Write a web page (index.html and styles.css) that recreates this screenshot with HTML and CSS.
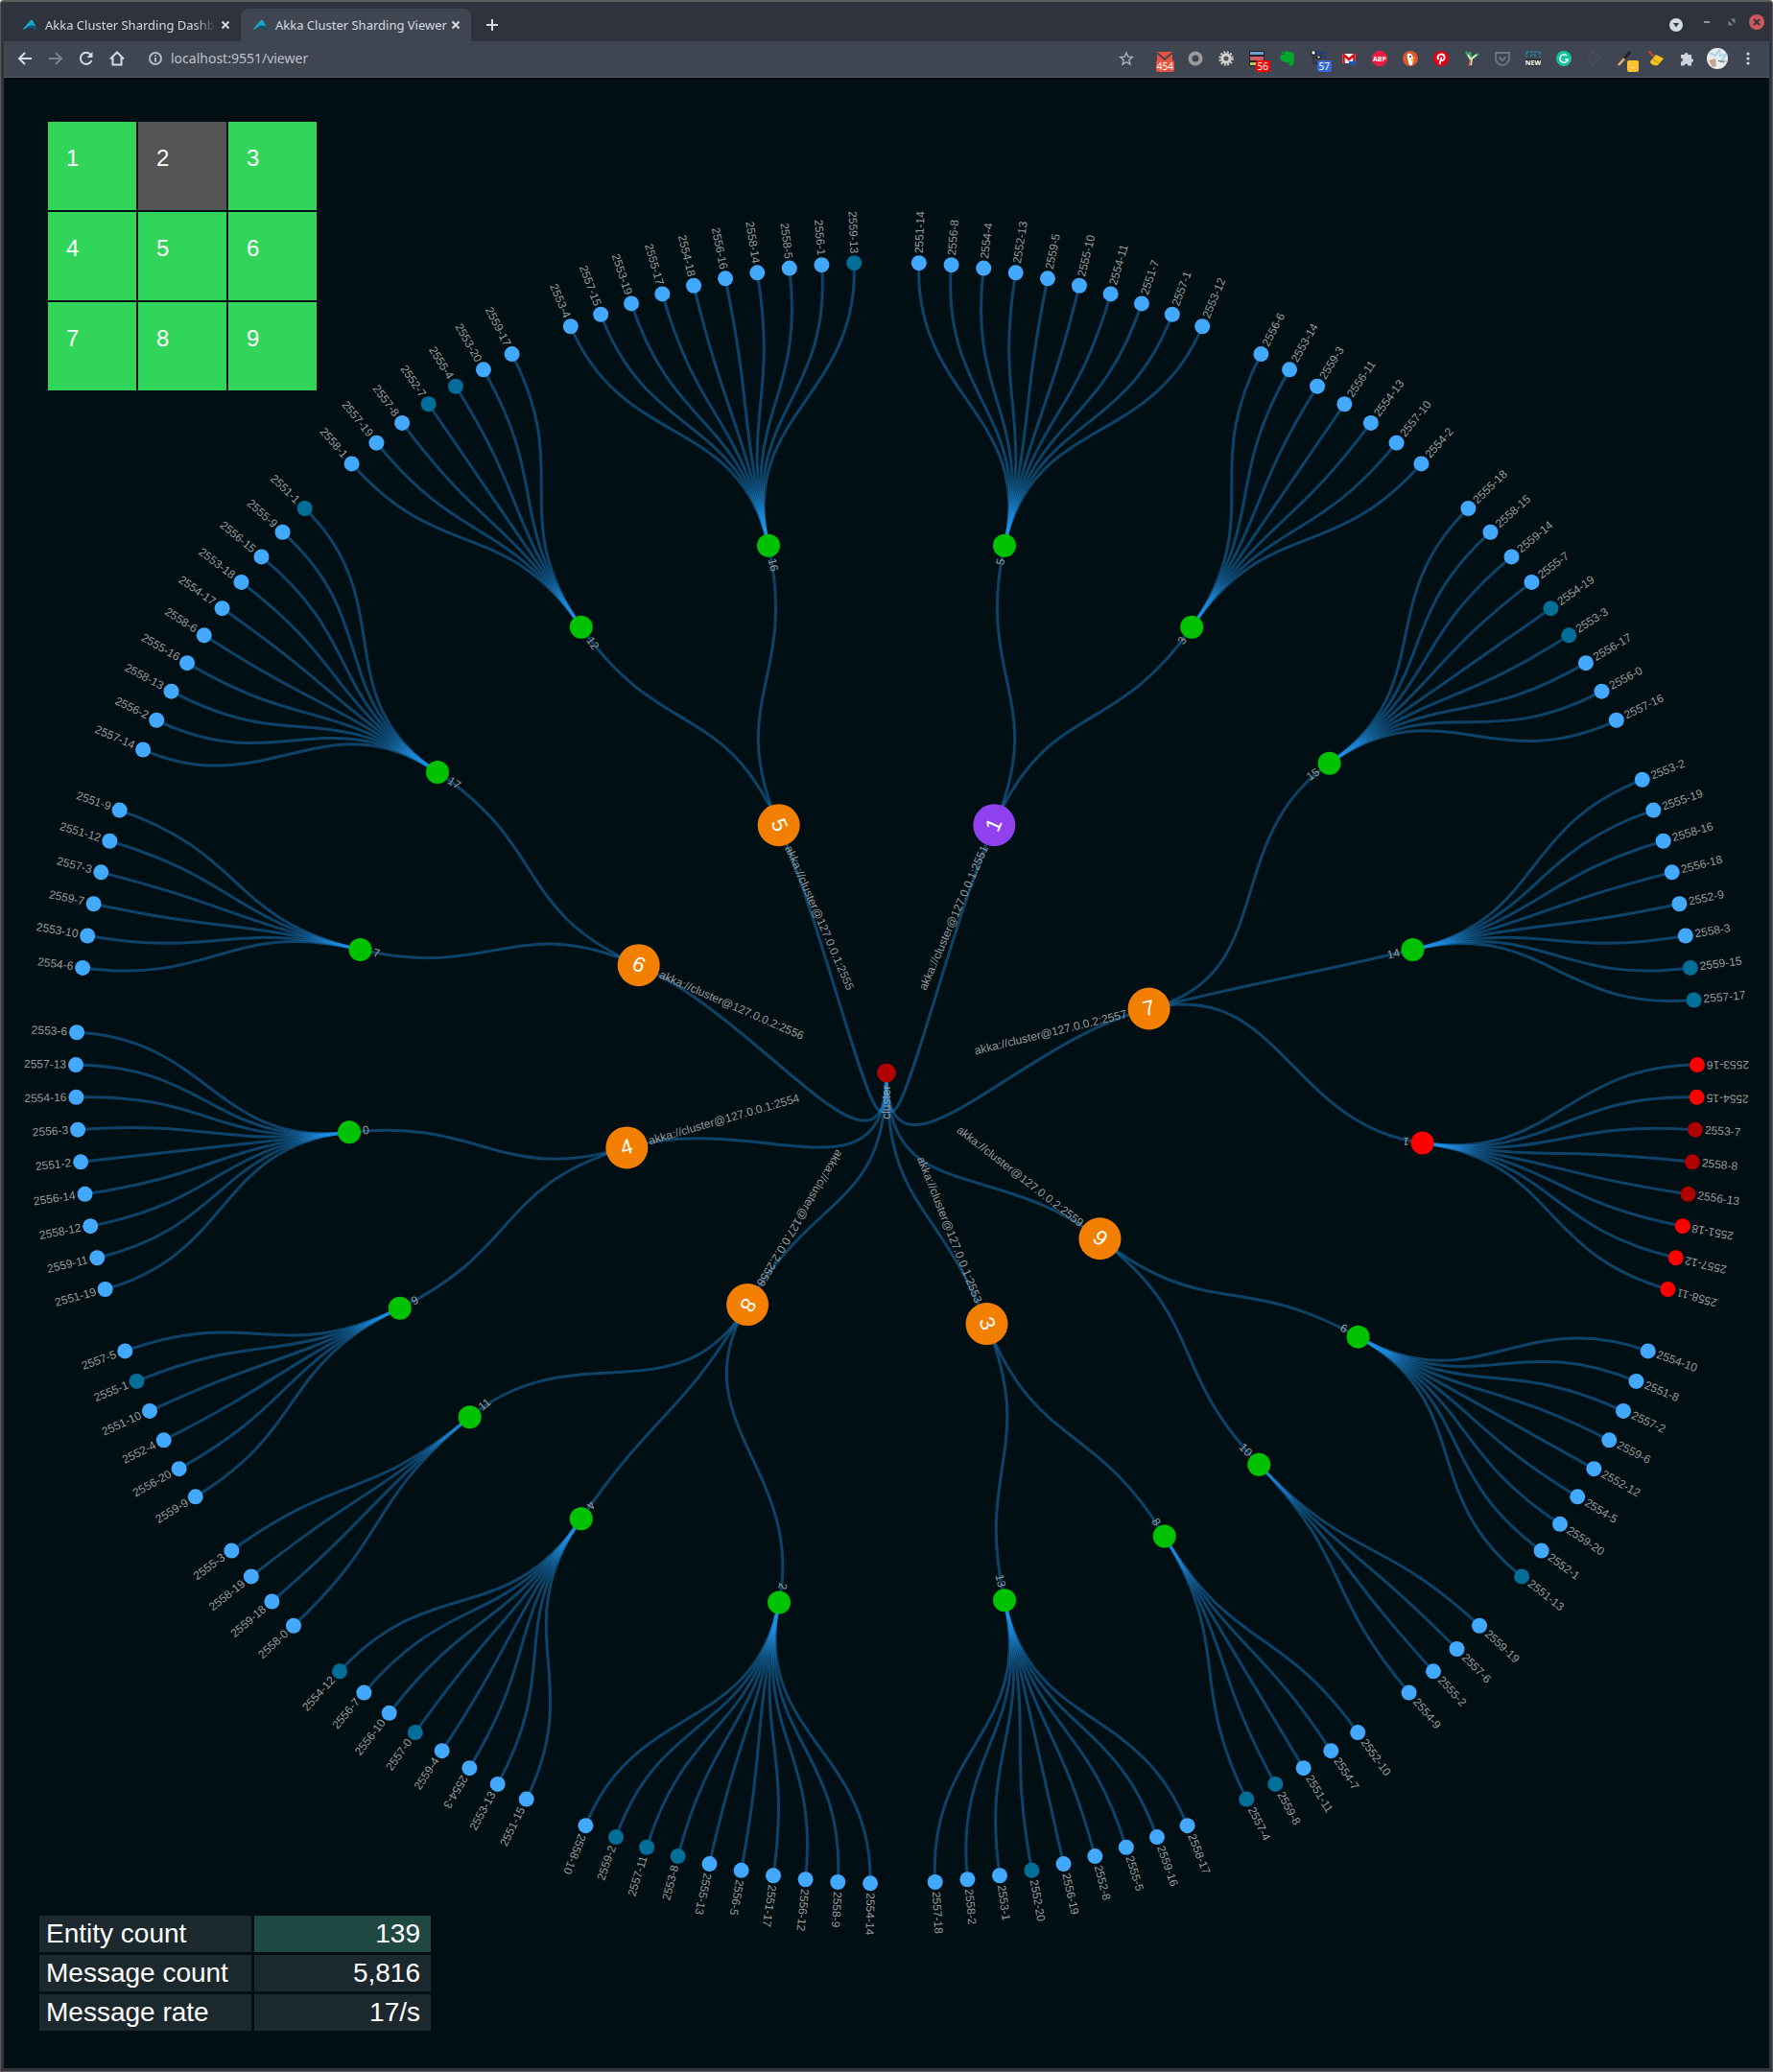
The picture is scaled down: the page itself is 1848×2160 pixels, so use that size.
FILE: index.html
```html
<!DOCTYPE html>
<html lang="en">
<head>
<meta charset="utf-8">
<title>Akka Cluster Sharding Viewer</title>
<link rel="stylesheet" href="styles.css">
</head>
<body>
<div class="window">
  <header class="tabstrip">
    <div class="tab">
      <svg class="favicon" viewBox="0 0 16 16"><path d="M0.500 12.500L8 4Q10 1.500 11.500 4L14.500 10Q10 7 6 10Q3 13 0.500 12.500z" fill="#15a9ce"/><path d="M5 10.800Q10 6.500 14.500 10Q16 13.500 13 13.200Q9 10.500 5 10.800z" fill="#0b5567"/></svg>
      <button class="tab-title">Akka Cluster Sharding Dashboard</button>
      <button class="tab-close" aria-label="Close tab"><svg viewBox="0 0 16 16"><path d="M4.500 4.500l7 7m0-7l-7 7"/></svg></button>
    </div>
    <div class="tab tab-active">
      <svg class="favicon" viewBox="0 0 16 16"><path d="M0.500 12.500L8 4Q10 1.500 11.500 4L14.500 10Q10 7 6 10Q3 13 0.500 12.500z" fill="#15a9ce"/><path d="M5 10.800Q10 6.500 14.500 10Q16 13.500 13 13.200Q9 10.500 5 10.800z" fill="#0b5567"/></svg>
      <button class="tab-title">Akka Cluster Sharding Viewer</button>
      <button class="tab-close" aria-label="Close tab"><svg viewBox="0 0 16 16"><path d="M4.500 4.500l7 7m0-7l-7 7"/></svg></button>
    </div>
    <button class="new-tab" aria-label="New tab"><svg viewBox="0 0 16 16"><path d="M8 2v12M2 8h12"/></svg></button>
    <div class="window-buttons">
      <button class="tab-search" aria-label="Search tabs"><svg viewBox="0 0 16 16"><circle cx="8" cy="8" r="7" fill="#d3dae3"/><path d="M5 6h6l-3 4.500z" fill="#2f333d"/></svg></button>
      <button aria-label="Minimize"><svg viewBox="0 0 16 16"><path d="M5 8h6" stroke="#90949e" stroke-width="2"/></svg></button>
      <button aria-label="Restore"><svg viewBox="0 0 16 16"><path d="M4.500 6.500v5h5zM11.500 9.500v-5h-5z" fill="#7a7e88"/></svg></button>
      <button aria-label="Close"><svg viewBox="0 0 16 16"><circle cx="8" cy="8" r="8" fill="#cc575d"/><path d="M5 5l6 6m0-6l-6 6" stroke="#2f333d" stroke-width="2"/></svg></button>
    </div>
  </header>

  <nav class="toolbar">
    <button class="tool" aria-label="Back"><svg viewBox="0 0 16 16" class="line"><path d="M15 8H2M8 2L2 8l6 6"/></svg></button>
    <button class="tool tool-off" aria-label="Forward"><svg viewBox="0 0 16 16" class="line"><path d="M1 8h13M8 2l6 6-6 6"/></svg></button>
    <button class="tool" aria-label="Reload"><svg viewBox="0 0 16 16" class="line"><path d="M13.500 10A6 6 0 1 1 12.500 4"/><path d="M14.500 1v6h-6z" fill="currentColor" stroke="none"/></svg></button>
    <button class="tool" aria-label="Home"><svg viewBox="0 0 16 16" class="line"><path d="M1 8.500L8 1.500l7 7M3.500 7v7.500h9V7"/></svg></button>
    <label class="address">
      <svg viewBox="0 0 16 16" class="info"><circle cx="8" cy="8" r="6"/><path d="M8 7v4.500M8 4.500v1.500"/></svg>
      <input type="text" value="localhost:9551/viewer" aria-label="Address">
    </label>
    <button class="star" aria-label="Bookmark"><svg viewBox="0 0 16 16"><path d="M8 2l1.800 4.200 4.500.4-3.400 3 1 4.400L8 11.700 4.100 14l1-4.400-3.400-3 4.500-.4z" fill="none" stroke="#aeb2bb" stroke-width="1.400"/></svg></button>

    <button class="tool" aria-label="Mail checker"><svg viewBox="0 0 16 16"><path d="M0 1h16v12H0z" fill="#e8523f"/><path d="M0 2l8 7 8-7" fill="none" stroke="#404552" stroke-width="2"/></svg><span class="badge badge-mail">454</span></button>
    <button class="tool" aria-label="Ring"><svg viewBox="0 0 16 16"><circle cx="8" cy="8" r="5.500" fill="none" stroke="#9b9b9b" stroke-width="4"/></svg></button>
    <button class="tool" aria-label="Settings"><svg viewBox="0 0 16 16"><circle cx="8" cy="8" r="6.500" fill="none" stroke="#c4c4c4" stroke-width="2.500" stroke-dasharray="2 1.400"/><circle cx="8" cy="8" r="4" fill="none" stroke="#d2d2d2" stroke-width="3"/><circle cx="8" cy="8" r="2" fill="#555"/></svg></button>
    <button class="tool" aria-label="Sessions"><svg viewBox="0 0 16 16"><path d="M0 0h16v5H0zM0 5h16v6H0zM0 11h16v5H0z" fill="#222"/><path d="M1 1h14v3H1z" fill="#6f9bd0"/><path d="M1 6h14v4H1z" fill="#cf5a6a"/><path d="M1 12h14v3H1z" fill="#b5d04a"/></svg><span class="badge badge-red">56</span></button>
    <button class="tool" aria-label="Notes"><svg viewBox="0 0 16 16"><path d="M5 0c2 0 2 1 4 1 3 0 5 0 5.500 3 .5 4 .5 9-1 11-1 1.500-4 1-4-1 0-1.500 1-2 2-2-1-1-3 1-5 0C5 11 2 12 1 9 0 7 0 5 1 4h4z" fill="#00a82d"/><path d="M1 3l3-3v3z" fill="#00a82d"/></svg></button>
    <button class="tool" aria-label="Tab tree"><svg viewBox="0 0 16 16"><path d="M3 2v12M3 7h5M3 13h5" stroke="#111" stroke-width="1" stroke-dasharray="1 1"/><path d="M1 0h4v4H1zM7 5h3v3H7zM7 11h3v3H7z" fill="#fff" stroke="#111"/><path d="M6 2h10M11 6.500h5M11 12h5" stroke="#1c3c80" stroke-width="3" stroke-dasharray="2 1"/></svg><span class="badge badge-blue">57</span></button>
    <button class="tool" aria-label="Gmail"><svg viewBox="0 0 16 16"><path d="M1 3h14v10H1z" fill="#f5f5f5"/><path d="M2.500 13V4L8 9l5.500-5v9" fill="none" stroke="#d4111b" stroke-width="2.500"/><path d="M8 11h4V9l4 3.500L12 16v-2H8z" fill="#1d56b8"/></svg></button>
    <button class="tool" aria-label="Ad blocker"><svg viewBox="0 0 16 16"><path d="M5 0h6l5 5v6l-5 5H5l-5-5V5z" fill="#ee1c43"/><text x="8" y="11" class="glyph">ABP</text></svg></button>
    <button class="tool" aria-label="Privacy search"><svg viewBox="0 0 16 16"><circle cx="8" cy="8" r="8" fill="#de5833"/><path d="M5 3c4-1 6 2 6 5l-1 7H7C6 11 4 7 5 3z" fill="#fff"/><path d="M9 8c2-1 5-1 4 0s-3 1-3 2c2 0 3 0 2 1-2 1-4 0-3-3z" fill="#fdb913"/><circle cx="8" cy="6" r="1" fill="#234"/></svg></button>
    <button class="tool" aria-label="Pins"><svg viewBox="0 0 16 16"><circle cx="8" cy="8" r="8" fill="#e60012"/><path d="M6.500 14l2-7.500M5.500 9C3 6 6 3.500 8.500 3.500c4 0 4 6.500.5 6.500-1 0-1.500-.5-1.500-1" fill="none" stroke="#fff" stroke-width="1.800"/></svg></button>
    <button class="tool" aria-label="Sprout"><svg viewBox="0 0 16 16"><path d="M7 9L2 1M8 8l7-5M7 8L6 1" stroke="#2fa86a" stroke-width="2.500"/><path d="M13 4L8 8l-1 7M4 4l3 5" fill="none" stroke="#d9e0ae" stroke-width="2"/><path d="M6 10l-1 6" stroke="#c44" stroke-width="1.500"/></svg></button>
    <button class="tool" aria-label="Read later"><svg viewBox="0 0 16 16"><path d="M1 2h14v6a7 7 0 0 1-14 0zM4.500 6.500L8 10l3.500-3.500" fill="none" stroke="#72767f" stroke-width="1.800"/></svg></button>
    <button class="tool" aria-label="Screen capture"><svg viewBox="0 0 16 16"><path d="M1 1h14M1 1v6M15 1v6M5 6l2-2h3v3" fill="none" stroke="#178a99" stroke-width="1.500" stroke-dasharray="3 1"/><path d="M0 8h16v8H0z" fill="#333"/><text x="8" y="15" class="glyph">NEW</text></svg></button>
    <button class="tool" aria-label="Grammar"><svg viewBox="0 0 16 16"><circle cx="8" cy="8" r="8" fill="#15c39a"/><path d="M11 5a4.200 4.200 0 1 0 1.200 4H9" fill="none" stroke="#fff" stroke-width="1.500"/></svg></button>
    <button class="tool" aria-label="Pointer"><svg viewBox="0 0 16 16" fill="#4d5058"><circle cx="6" cy="2" r="1.500"/><circle cx="10" cy="5" r="1.500"/><circle cx="14" cy="7" r="1.500"/><circle cx="2" cy="8" r="1.500"/><circle cx="10" cy="11" r="1.500"/><circle cx="6" cy="14" r="1.500"/></svg></button>
    <button class="tool" aria-label="Color picker"><svg viewBox="0 0 16 16"><path d="M1 15l7-8" stroke="#d8b46c" stroke-width="2.500"/><path d="M7 8l6-7" stroke="#222" stroke-width="3"/></svg><span class="badge badge-yellow">-</span></button>
    <button class="tool" aria-label="Cleaner"><svg viewBox="0 0 16 16"><path d="M0 0l6 6" stroke="#d5442d" stroke-width="2"/><path d="M8 4l8 4-6 7C6 16 2 14 2 11z" fill="#f2c21d"/><path d="M5 9l6 4" stroke="#b58a08"/></svg></button>
    <button class="tool" aria-label="Extensions"><svg viewBox="0 0 16 16"><path d="M2 4h3.500a2 2 0 1 1 4 0H13v4a2 2 0 1 1 0 4v3.500H9.500a2 2 0 1 0-4 0H2v-4a2 2 0 1 0 0-4z" fill="#ced3dc"/></svg></button>
    <button class="tool" aria-label="Profile"><svg viewBox="0 0 22 22" class="avatar"><circle cx="11" cy="11" r="11" fill="#e8ecee"/><path d="M3 5l6 3 4-6 1 6 6-1-4 5 5 3" fill="none" stroke="#a8d4e4" stroke-width="2"/><path d="M2 13l7-2 1 8-4 1z" fill="#c8a48c"/><path d="M12 13c2 2 4 0 6 2" fill="none" stroke="#445"/></svg></button>
    <button class="tool" aria-label="Menu"><svg viewBox="0 0 16 16" fill="#d3dae3"><circle cx="8" cy="3" r="1.600"/><circle cx="8" cy="8" r="1.600"/><circle cx="8" cy="13" r="1.600"/></svg></button>
  </nav>

  <main class="viewer">
    <svg id="cluster-tree" class="tree" viewBox="-920 -1037.500 1840 2075" role="img" aria-label="Cluster members, shards and entities"></svg>
    <div class="members">
      <button class="member">1</button>
      <button class="member member-down">2</button>
      <button class="member">3</button>
      <button class="member">4</button>
      <button class="member">5</button>
      <button class="member">6</button>
      <button class="member">7</button>
      <button class="member">8</button>
      <button class="member">9</button>
    </div>
    <table class="stats">
      <tr><th scope="row">Entity count</th><td class="changed">139</td></tr>
      <tr><th scope="row">Message count</th><td>5,816</td></tr>
      <tr><th scope="row">Message rate</th><td>17/s</td></tr>
    </table>
  </main>
</div>
<script src="viewer.js"></script>
</body>
</html>
```
FILE: styles.css
```css
* { box-sizing: border-box; }

body {
  margin: 0;
  background: #fff;
  font-family: "Noto Sans", sans-serif;
}

button {
  margin: 0;
  padding: 0;
  border: 0;
  background: none;
  color: inherit;
  font: inherit;
}

svg { display: block; }

.window {
  display: flex;
  flex-direction: column;
  min-height: 100vh;
  padding: 0 3px 3px;
  border: 1px solid #5c5c5c;
  border-top-width: 2px;
  border-radius: 4px 4px 0 0;
  background: #32333d;
}

/* Tab strip */
.tabstrip {
  display: flex;
  align-items: flex-end;
  height: 41px;
  padding: 0 5px 0 7px;
  background: #2f333d;
  color: #d3dae3;
}

.tab {
  display: flex;
  align-items: center;
  width: 240px;
  height: 34px;
  padding: 0 8px 0 12px;
}

.tab-active {
  border-radius: 8px 8px 0 0;
  background: #404552;
}

.favicon {
  width: 16px;
  height: 16px;
  margin-right: 8px;
}

.tab-title {
  flex: 1;
  min-width: 0;
  overflow: hidden;
  font-size: 13px;
  line-height: 20px;
  text-align: left;
  white-space: nowrap;
  mask-image: linear-gradient(to right, #000 calc(100% - 24px), transparent calc(100% - 2px));
}

.tab-active .tab-title {
  overflow: visible;
  mask-image: none;
}

.tab-close svg {
  width: 16px;
  height: 16px;
  fill: none;
  stroke: currentColor;
  stroke-width: 2;
}

.new-tab {
  display: grid;
  place-items: center;
  width: 28px;
  height: 34px;
  margin-left: 8px;
}

.new-tab svg {
  width: 16px;
  height: 16px;
  stroke: currentColor;
  stroke-width: 2;
}

.window-buttons {
  display: flex;
  align-self: center;
  align-items: center;
  gap: 10px;
  margin-left: auto;
}

.window-buttons svg {
  width: 16px;
  height: 16px;
}

.tab-search {
  margin-right: 6px;
  padding-top: 6px;
}

/* Toolbar */
.toolbar {
  display: flex;
  align-items: center;
  height: 38px;
  padding: 0 6px 2px;
  border-bottom: 1px solid #5c5c5c;
  background: #404552;
  color: #d3dae3;
}

.tool {
  display: grid;
  position: relative;
  place-items: center;
  width: 32px;
  height: 32px;
}

.tool svg {
  width: 16px;
  height: 16px;
}

.tool .avatar {
  width: 22px;
  height: 22px;
}

.tool-off { color: #7c818c; }

.line {
  fill: none;
  stroke: currentColor;
  stroke-width: 2;
}

.address {
  display: flex;
  flex: 1;
  align-items: center;
  gap: 8px;
  padding-left: 16px;
}

.info {
  width: 16px;
  height: 16px;
  fill: none;
  stroke: #b4b8c1;
  stroke-width: 2;
}

.address input {
  flex: 1;
  min-width: 0;
  padding: 0;
  border: 0;
  outline: 0;
  background: none;
  color: #bcc1ca;
  font: 14px/20px "Noto Sans", sans-serif;
}

.star { margin-right: 16px; }

.star svg {
  width: 16px;
  height: 16px;
}

.badge {
  position: absolute;
  right: 2px;
  bottom: 2px;
  padding: 0 2px;
  border-radius: 2px;
  color: #fff;
  font-size: 10px;
  line-height: 12px;
}

.badge-mail {
  right: 6px;
  padding: 0 1px;
  background: #e8523f;
}

.badge-red { background: #f00; }
.badge-blue { background: #3367d6; }

.badge-yellow {
  width: 12px;
  background: #ffc033;
  text-align: center;
}

.glyph {
  fill: #fff;
  font: 700 7px "Open Sans", sans-serif;
  text-anchor: middle;
}

/* Viewer page */
.viewer {
  display: grid;
  flex: 1;
  background: #000f14;
  color: #fff;
  font-family: "Liberation Sans", Arial, sans-serif;
}

.viewer > * { grid-area: 1 / 1; }

.tree {
  width: 100%;
  font-size: 12px;
}

.members {
  display: grid;
  grid-template-columns: repeat(3, 92px);
  grid-auto-rows: 92px;
  gap: 2px;
  place-self: start;
  margin: 46px;
}

.member {
  display: flex;
  align-items: flex-start;
  padding: 24px 19px;
  background: #30d55a;
  font-size: 24px;
  line-height: 28px;
}

.member-down { background: #555; }

.stats {
  place-self: end start;
  width: 414px;
  margin: 0 34px 36px;
  border-spacing: 3px;
  table-layout: fixed;
  font-size: 28px;
  line-height: 38px;
}

.stats th,
.stats td {
  height: 38px;
  padding: 0 7px;
  background: #1b282e;
  font-weight: 400;
}

.stats th {
  width: 221px;
  text-align: left;
}

.stats td {
  padding-right: 11px;
  text-align: right;
}

.stats .changed { background: #1f4842; }

/* Radial tree */
.link {
  fill: none;
  stroke: #2090e8;
  stroke-opacity: 0.4;
  stroke-width: 3;
}

.node-cluster { fill: #b00000; }
.node-member { fill: #f27f00; }
.node-self { fill: #9040ec; }
.node-shard { fill: #00c200; }
.node-entity { fill: #42a9ff; }
.node-recent { fill: #036e98; }
.node-stopping { fill: #f00; }
.node-stopped { fill: #b00000; }

.label { fill: #999; }

.number {
  fill: #fff;
  font-size: 22px;
  text-anchor: middle;
}
```
FILE: viewer.js
```js
// A trailing letter sets an entity's state: + recently used, ! stopping, x stopped.
// A leading ~ marks a label that is turned over.
const cluster = [
  { id: 1, host: '127.0.0.1', self: true, shards: {
    ' 5': '2551-14 2556-8 2554-4 2552-13 2559-5 2555-10 2554-11 2551-7 2557-1 2553-12',
    ' 3': '2556-6 2553-14 2559-3 2556-11 2554-13 2557-10 2554-2' } },
  { id: 7, host: '127.0.0.2', shards: {
    ' 15': '2555-18 2558-15 2559-14 2555-7 2554-19+ 2553-3+ 2556-17 2556-0 2557-16',
    ' 14': '2553-2 2555-19 2558-16 2556-18 2552-9 2558-3 2559-15+ 2557-17+',
    '~1!': '~2553-16! ~2554-15! 2553-7x 2558-8x 2556-13x ~2551-18! ~2557-12! ~2558-11!' } },
  { id: 9, host: '127.0.0.2', shards: {
    ' 6': '2554-10 2551-8 2557-2 2559-6 2552-12 2554-5 2559-20 2552-1 2551-13+',
    ' 10': '2559-19 2557-6 2555-2 2554-9' } },
  { id: 3, host: '127.0.0.1', shards: {
    ' 8': '2552-10 2554-7 2551-11 2559-8+ 2557-4+',
    ' 13': '2558-17 2559-16 2555-5 2552-8 2556-19 2552-20+ 2553-1 2558-2 2557-18' } },
  { id: 8, host: '127.0.0.2', flip: true, shards: {
    '~2': '~2554-14 ~2558-9 ~2556-12 ~2551-17 ~2556-5 ~2555-13 2553-8+ 2557-11+ 2559-2+ ~2558-10',
    '~4': '2551-15 2553-13 ~2554-3 2559-4 2557-0+ 2556-10 2556-7 2554-12+',
    ' 11': '2558-0 2559-18 2558-19 2555-3' } },
  { id: 4, host: '127.0.0.1', shards: {
    ' 9': '2559-9 2556-20 2552-4 2551-10 2555-1+ 2557-5',
    ' 0': '2551-19 2559-11 2558-12 2556-14 2551-2 2556-3 2554-16 2557-13 2553-6' } },
  { id: 6, host: '127.0.0.2', shards: {
    ' 7': '2554-6 2553-10 2559-7 2557-3 2551-12 2551-9',
    ' 17': '2557-14 2556-2 2558-13 2555-16 2558-6 2554-17 2553-18 2556-15 2555-9 2551-1+' } },
  { id: 5, host: '127.0.0.1', shards: {
    ' 12': '2558-1 2557-19 2557-8 2552-7+ 2555-4+ 2553-20 2559-17',
    ' 16': '2553-4 2557-15 2553-19 2555-17 2554-18 2556-16 2558-14 2558-5 2556-1 2559-13+' } }
];

const RADIUS = 845;
const STATES = { '+': 'node-recent', '!': 'node-stopping', 'x': 'node-stopped' };

function parse(token, kind) {
  const m = token.trim().match(/^(~?)([\d-]+)([+!x]?)$/);
  return { name: m[2], flip: m[1] === '~', kind, cls: STATES[m[3]] || 'node-' + kind };
}

// Tree of cluster > members > shards > entities. Entities take one slot each
// round the circle, with an empty slot after every shard.
const root = { name: 'cluster', kind: 'cluster', cls: 'node-cluster', depth: 0 };
let slot = 0;
const middle = list => (list[0].slot + list[list.length - 1].slot) / 2;

root.children = cluster.map(m => {
  const member = {
    name: 'akka://cluster@' + m.host + ':255' + m.id, number: m.id,
    kind: 'member', cls: m.self ? 'node-self' : 'node-member', flip: m.flip, depth: 1
  };
  member.children = Object.entries(m.shards).map(([key, entities]) => {
    const shard = parse(key, 'shard');
    shard.depth = 2;
    shard.children = entities.split(' ').map(e =>
      Object.assign(parse(e, 'entity'), { depth: 3, slot: ++slot }));
    slot += 1;
    shard.slot = middle(shard.children);
    return shard;
  });
  member.slot = middle(member.children);
  return member;
});
root.slot = middle(root.children);

const SHAPES = {
  cluster: { r: 10, gap: 13 },
  member: { r: 22, gap: 24 },
  shard: { r: 12, gap: 14 },
  entity: { r: 8, gap: 10 }
};

const svg = document.getElementById('cluster-tree');
const layers = [0, 1, 2].map(() => add(svg, 'g', {}));

function add(parent, tag, attrs, text) {
  const el = document.createElementNS('http://www.w3.org/2000/svg', tag);
  for (const key in attrs) el.setAttribute(key, attrs[key]);
  if (text !== undefined) el.textContent = text;
  parent.appendChild(el);
  return el;
}

const degrees = n => n.slot / slot * 360;
const radius = n => n.depth * RADIUS / 3;

function point(angle, r) {
  const a = (angle - 90) * Math.PI / 180;
  return (r * Math.cos(a)).toFixed(2) + ',' + (r * Math.sin(a)).toFixed(2);
}

function draw(node) {
  const angle = degrees(node), r = radius(node), shape = SHAPES[node.kind];
  for (const child of node.children || []) {
    const mid = (r + radius(child)) / 2, to = degrees(child);
    add(layers[0], 'path', {
      class: 'link',
      d: 'M' + point(angle, r) + 'C' + point(angle, mid) + ' ' + point(to, mid) + ' ' + point(to, radius(child))
    });
    draw(child);
  }
  const [cx, cy] = point(angle, r).split(',');
  add(layers[1], 'circle', { class: node.cls, cx, cy, r: shape.r });

  const outward = node.kind === 'entity' || node.kind === 'cluster';
  let turned = angle >= 180;
  if (node.flip) turned = !turned;
  const after = outward !== turned;
  const place = 'translate(' + cx + ' ' + cy + ') rotate(' + (angle - 90 + (turned ? 180 : 0)) + ')';
  add(layers[2], 'text', {
    class: 'label', transform: place, dy: '0.3em',
    x: after ? shape.gap : -shape.gap, 'text-anchor': after ? 'start' : 'end'
  }, node.name);
  if (node.number) add(layers[2], 'text', { class: 'number', transform: place, dy: '0.3em' }, node.number);
}

draw(root);
```
